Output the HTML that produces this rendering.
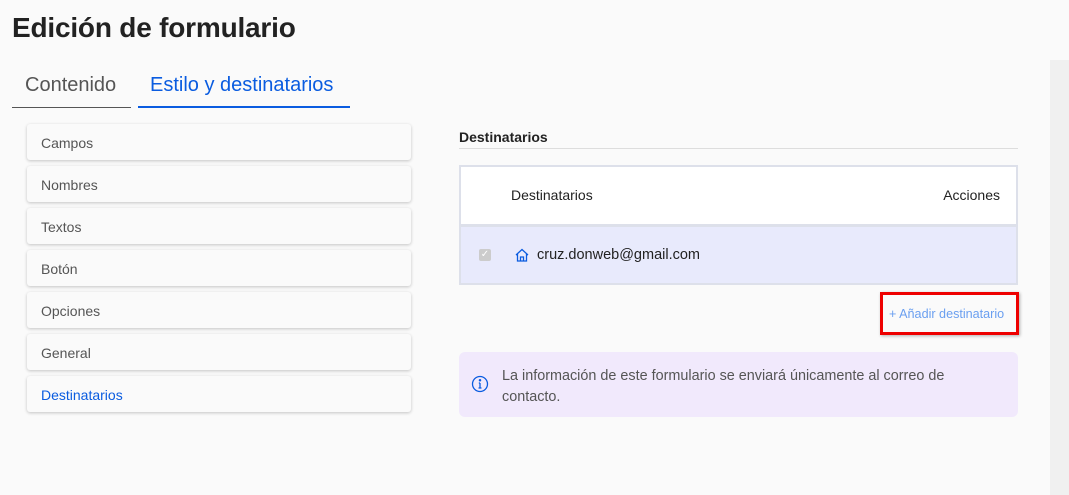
<!DOCTYPE html>
<html><head><meta charset="utf-8"><style>
*{margin:0;padding:0;box-sizing:border-box}
body{width:1069px;height:495px;background:#fafafa;font-family:"Liberation Sans",sans-serif;position:relative;overflow:hidden;color:#222}
.abs{position:absolute}
h1{position:absolute;left:12px;top:12px;font-size:28px;font-weight:bold;color:#222;letter-spacing:-0.2px}
.tab{position:absolute;top:74px;font-size:20px;height:34px}
.item{position:absolute;left:27px;width:384px;height:36px;background:#fafafa;border-radius:3px;box-shadow:0 1px 3px rgba(0,0,0,.22);font-size:14px;color:#555;padding:11px 14px}
</style></head><body>
<h1>Edición de formulario</h1>
<div class="tab" style="left:12px;width:119px;border-bottom:1px solid #555;color:#555;padding-left:13px">Contenido</div>
<div class="tab" style="left:138px;width:212px;border-bottom:2px solid #0a5ce0;color:#0a5ce0;padding-left:12px">Estilo y destinatarios</div>
<div class="item" style="top:124px">Campos</div>
<div class="item" style="top:166px">Nombres</div>
<div class="item" style="top:208px">Textos</div>
<div class="item" style="top:250px">Botón</div>
<div class="item" style="top:292px">Opciones</div>
<div class="item" style="top:334px">General</div>
<div class="item" style="top:376px;color:#0a5ce0">Destinatarios</div>
<div class="abs" style="left:459px;top:129px;font-size:14px;font-weight:bold;color:#222">Destinatarios</div>
<div class="abs" style="left:459px;top:148px;width:559px;height:1px;background:#ddd"></div>
<div class="abs" style="left:459px;top:165px;width:559px;height:120px;border:2px solid #dde0ea;background:#fff">
 <div class="abs" style="left:0;top:57px;width:555px;height:3px;background:#dde0ea"></div>
 <div class="abs" style="left:50px;top:20px;font-size:14px;color:#222">Destinatarios</div>
 <div class="abs" style="right:16px;top:20px;font-size:14px;color:#222">Acciones</div>
 <div class="abs" style="left:0;top:60px;width:555px;height:56px;background:#e8eafc">
  <div class="abs" style="left:18px;top:22px;width:12px;height:12px;background:#ccc;border-radius:2px;color:#fff;font-size:10px;text-align:center;line-height:12px">✓</div>
  <svg class="abs" style="left:53px;top:20px" width="16" height="16" viewBox="0 0 16 16" fill="none" stroke="#0a5ce0" stroke-width="1.3"><path d="M2 8 L8 2.5 L14 8 M3.5 6.8 V14 H12.5 V6.8 M6.5 14 V10 H9.5 V14"/></svg>
  <div class="abs" style="left:76px;top:20px;font-size:14.5px;color:#222">cruz.donweb@gmail.com</div>
 </div>
</div>
<div class="abs" style="left:880px;top:292px;width:139px;height:43px;border:3px solid #e00;box-shadow:1px 1px 3px rgba(0,0,0,.3)"></div>
<div class="abs" style="left:889px;top:307px;font-size:12.6px;color:#6a9ff0">+ Añadir destinatario</div>
<div class="abs" style="left:459px;top:352px;width:559px;height:65px;background:#f1e9fc;border-radius:6px">
 <svg class="abs" style="left:12px;top:23px" width="18" height="18" viewBox="0 0 18 18" fill="none" stroke="#0a5ce0" stroke-width="1.3"><circle cx="9" cy="9" r="7.5"/><path d="M9 8 V13 M7.5 13 H10.5 M7.8 8 H9"/><circle cx="9" cy="5.3" r=".6" fill="#0a5ce0"/></svg>
 <div class="abs" style="left:43px;top:14px;width:490px;font-size:14.4px;line-height:21px;color:#555">La información de este formulario se enviará únicamente al correo de contacto.</div>
</div>
<div class="abs" style="left:1050px;top:60px;width:19px;height:435px;background:#f0f0f0"></div>
</body></html>
